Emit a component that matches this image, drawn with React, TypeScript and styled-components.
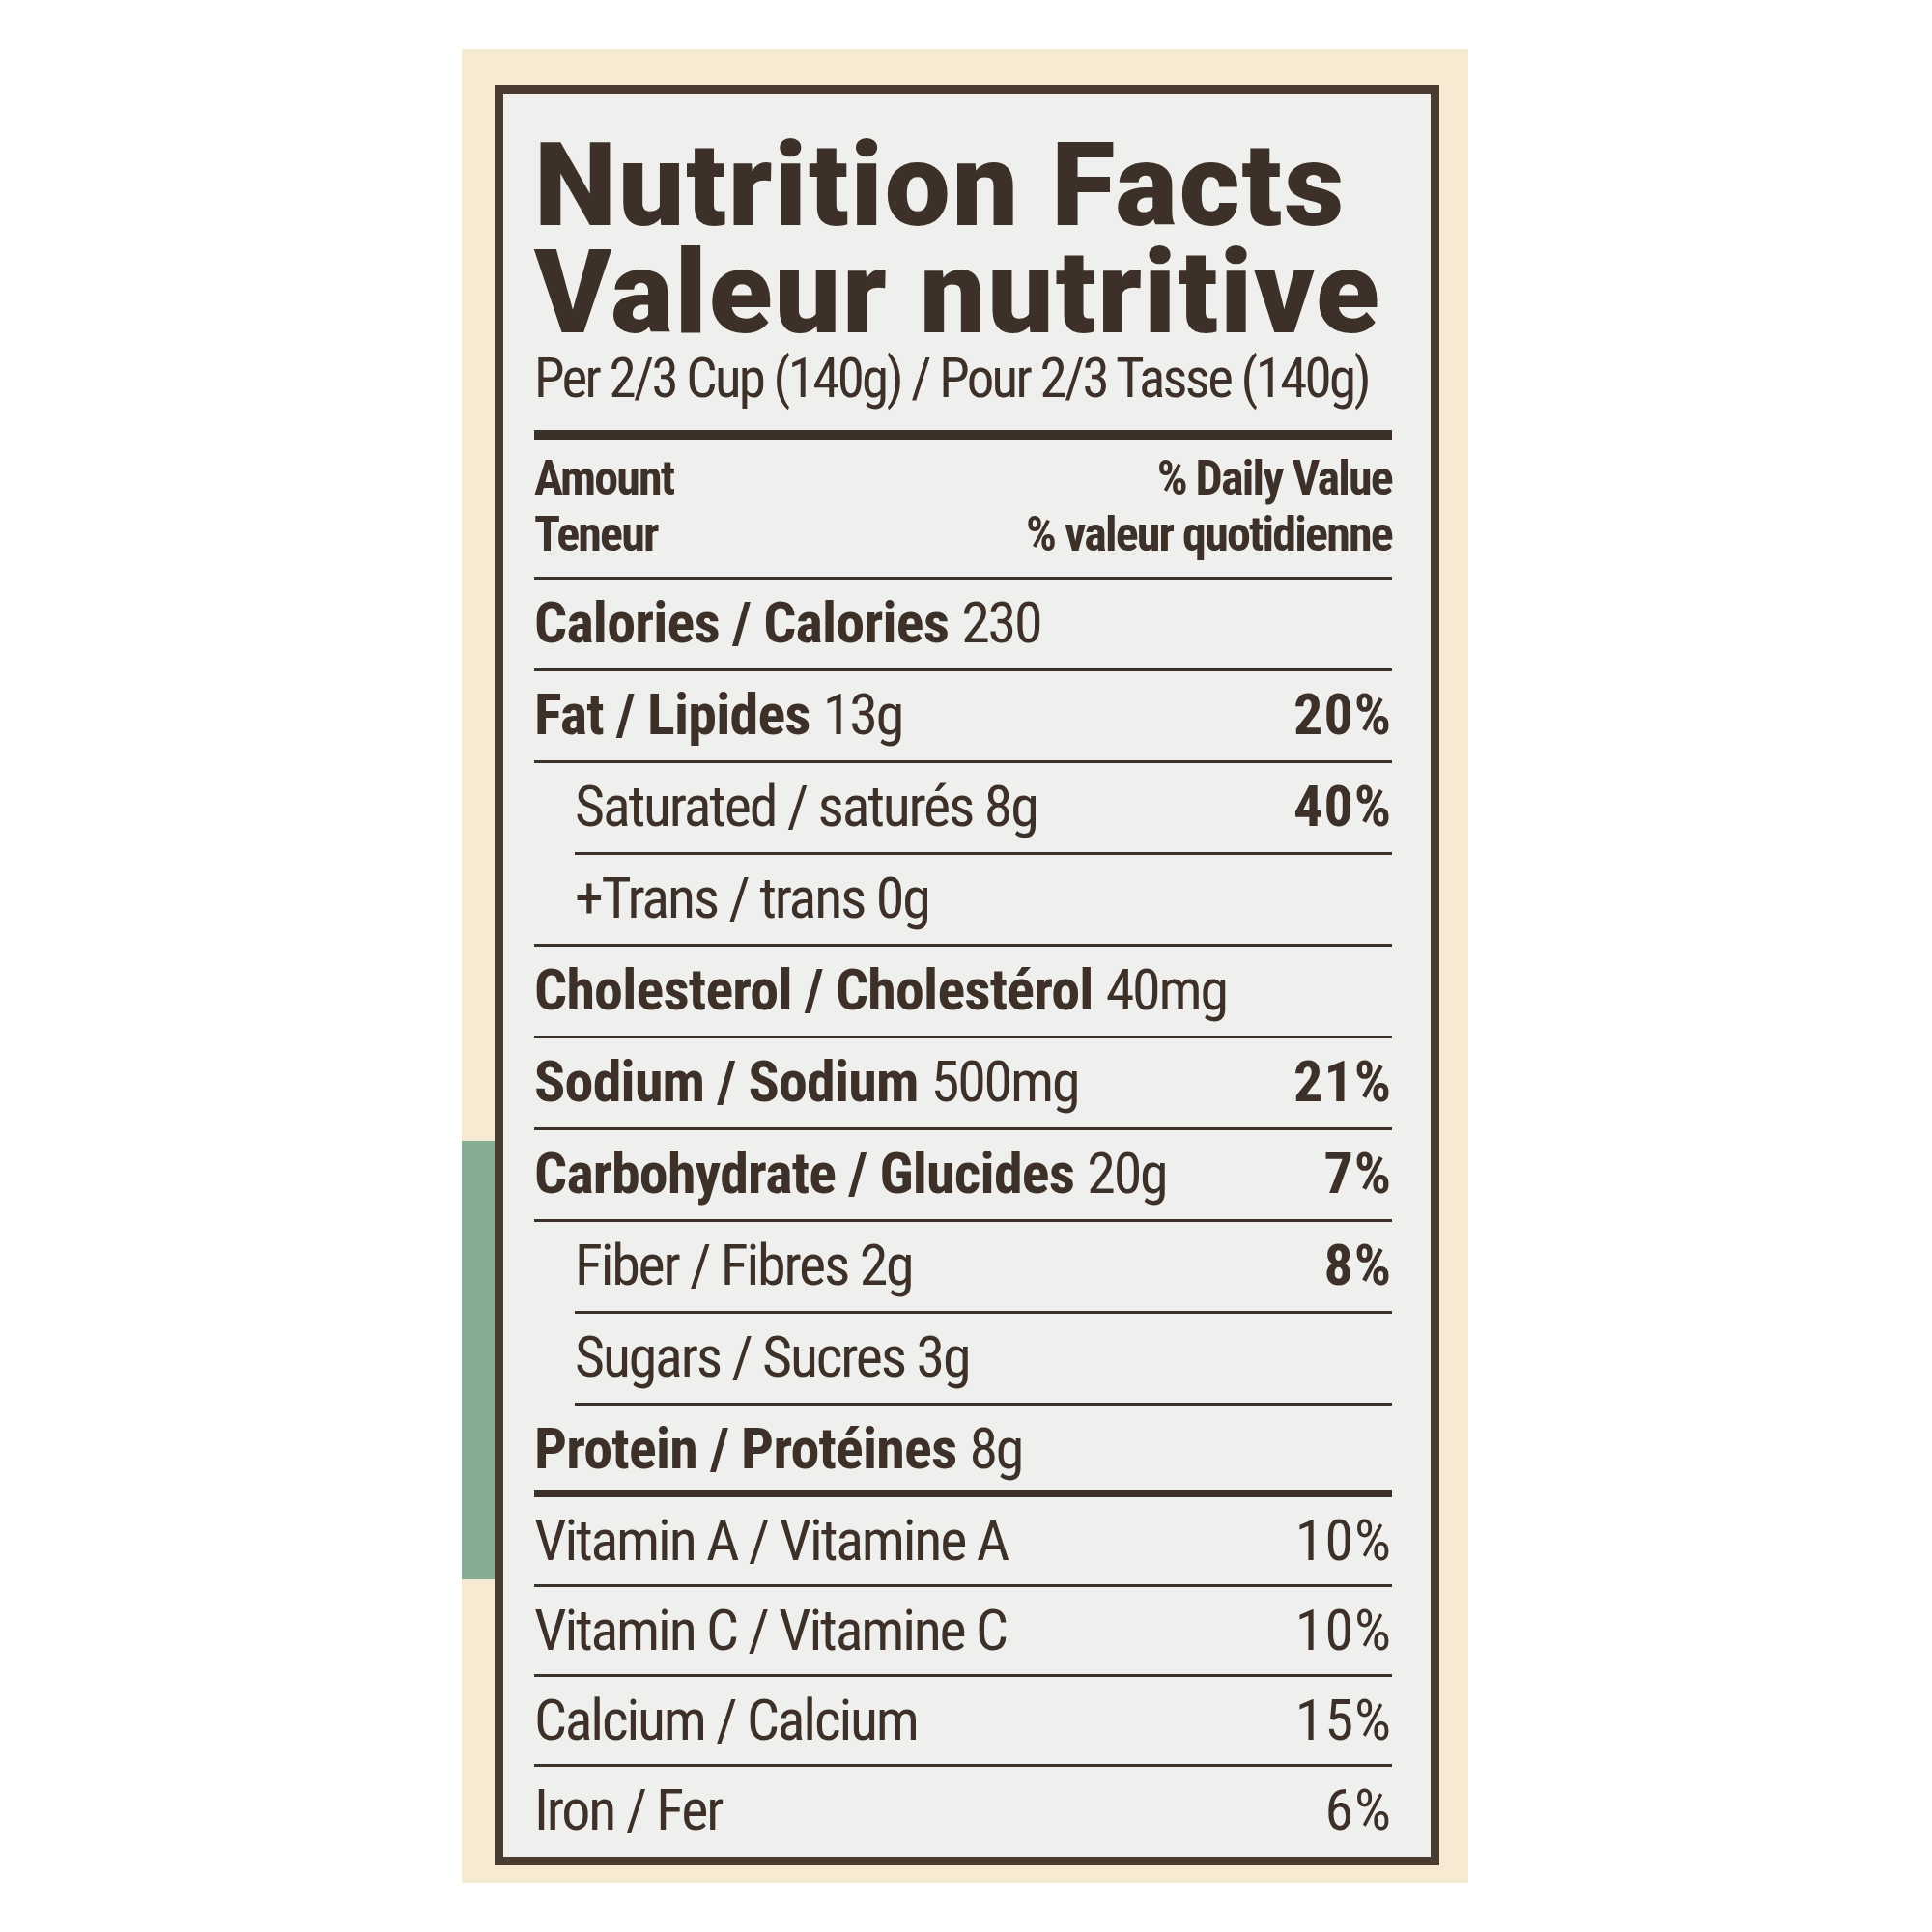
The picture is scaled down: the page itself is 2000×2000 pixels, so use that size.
import React from "react";
import styled, { createGlobalStyle } from "styled-components";

const INK = "#3d3028";
const FRAME = "#4a3c31";

const Global = createGlobalStyle`
  html, body { margin: 0; padding: 0; background: #ffffff; }
`;

const Page = styled.main`
  width: 2000px;
  height: 2000px;
  box-sizing: border-box;
  padding: 51px 0 0 478px;
  background: #ffffff;
`;

const Package = styled.section`
  width: 1042px;
  height: 1898px;
  box-sizing: border-box;
  padding: 37px 30px 0 34px;
  background-color: #f6ebd2;
  background-image: linear-gradient(#86ad94, #86ad94);
  background-repeat: no-repeat;
  background-size: 42px 454px;
  background-position: 0 1130px;
`;

const Label = styled.article`
  border: 9px solid ${FRAME};
  background: #eff0ee;
  padding: 40px 40px 0 32px;
  color: ${INK};
  font-family: Roboto, "Liberation Sans", sans-serif;
`;

const Title = styled.h1`
  margin: 0;
  font-weight: 900;
  font-size: 121px;
  line-height: 111px;
  letter-spacing: 2px;
`;

const TitleLine = styled.span`
  display: block;
  white-space: nowrap;
`;

const Serving = styled.div`
  margin-top: 3px;
  font-stretch: 75%;
  font-weight: 400;
  font-size: 57px;
  line-height: 60px;
  letter-spacing: -2.7px;
  white-space: nowrap;
`;

const Rule = styled.hr<{ $h: number }>`
  margin: 23px 0 0;
  border: 0;
  height: ${(p) => p.$h}px;
  background: ${INK};
`;

const ColumnHead = styled.div`
  display: flex;
  justify-content: space-between;
  padding: 10px 0 15px;
  border-bottom: 3px solid ${INK};
  font-stretch: 75%;
  font-weight: 700;
  font-size: 50px;
  line-height: 58px;
  letter-spacing: -1.8px;
  white-space: nowrap;
`;

const HeadCol = styled.div<{ $right?: boolean }>`
  display: flex;
  flex-direction: column;
  align-items: ${(p) => (p.$right ? "flex-end" : "flex-start")};
`;

type RuleKind = "full" | "indent" | "thick" | "none";

const ruleSize = (r: RuleKind) =>
  r === "none"
    ? "0 0"
    : r === "indent"
    ? "calc(100% - 42px) 3px"
    : r === "thick"
    ? "100% 8px"
    : "100% 3px";

const Row = styled.div<{ $indent?: boolean; $rule: RuleKind }>`
  display: flex;
  justify-content: space-between;
  align-items: baseline;
  height: 95px;
  box-sizing: border-box;
  padding: 16px 0 0 ${(p) => (p.$indent ? 42 : 0)}px;
  font-stretch: 75%;
  font-weight: 400;
  font-size: 60px;
  line-height: 58px;
  letter-spacing: -2.2px;
  white-space: nowrap;
  background-image: linear-gradient(${INK}, ${INK});
  background-repeat: no-repeat;
  background-position: right bottom;
  background-size: ${(p) => ruleSize(p.$rule)};
`;

const VitaminRow = styled(Row)`
  height: 93px;
`;

const Name = styled.span`
  font-weight: 700;
  letter-spacing: -0.8px;
`;

const Pct = styled.span<{ $bold?: boolean }>`
  font-weight: ${(p) => (p.$bold ? 700 : 400)};
  letter-spacing: 1px;
`;

type Nutrient = {
  bold?: string;
  text: string;
  pct?: string;
  indent?: boolean;
  rule: RuleKind;
};

const nutrients: Nutrient[] = [
  { bold: "Calories / Calories", text: "230", rule: "full" },
  { bold: "Fat / Lipides", text: "13g", pct: "20%", rule: "full" },
  { text: "Saturated / saturés 8g", pct: "40%", indent: true, rule: "indent" },
  { text: "+Trans / trans 0g", indent: true, rule: "full" },
  { bold: "Cholesterol / Cholestérol", text: "40mg", rule: "full" },
  { bold: "Sodium / Sodium", text: "500mg", pct: "21%", rule: "full" },
  { bold: "Carbohydrate / Glucides", text: "20g", pct: "7%", rule: "full" },
  { text: "Fiber / Fibres 2g", pct: "8%", indent: true, rule: "indent" },
  { text: "Sugars / Sucres 3g", indent: true, rule: "indent" },
  { bold: "Protein / Protéines", text: "8g", rule: "thick" },
];

const vitamins: [string, string][] = [
  ["Vitamin A / Vitamine A", "10%"],
  ["Vitamin C / Vitamine C", "10%"],
  ["Calcium / Calcium", "15%"],
  ["Iron / Fer", "6%"],
];

export default function App() {
  return (
    <>
      <Global />
      <Page>
        <Package>
          <Label>
            <Title>
              <TitleLine>Nutrition Facts</TitleLine>
              <TitleLine>Valeur nutritive</TitleLine>
            </Title>
            <Serving>Per 2/3 Cup (140g) / Pour 2/3 Tasse (140g)</Serving>
            <Rule $h={11} />
            <ColumnHead>
              <HeadCol>
                <span>Amount</span>
                <span>Teneur</span>
              </HeadCol>
              <HeadCol $right>
                <span>% Daily Value</span>
                <span>% valeur quotidienne</span>
              </HeadCol>
            </ColumnHead>
            {nutrients.map((n, i) => (
              <Row key={i} $indent={n.indent} $rule={n.rule}>
                <span>
                  {n.bold && <Name>{n.bold} </Name>}
                  {n.text}
                </span>
                {n.pct && <Pct $bold>{n.pct}</Pct>}
              </Row>
            ))}
            {vitamins.map(([name, pct], i) => (
              <VitaminRow key={name} $rule={i === vitamins.length - 1 ? "none" : "full"}>
                <span>{name}</span>
                <Pct>{pct}</Pct>
              </VitaminRow>
            ))}
          </Label>
        </Package>
      </Page>
    </>
  );
}
